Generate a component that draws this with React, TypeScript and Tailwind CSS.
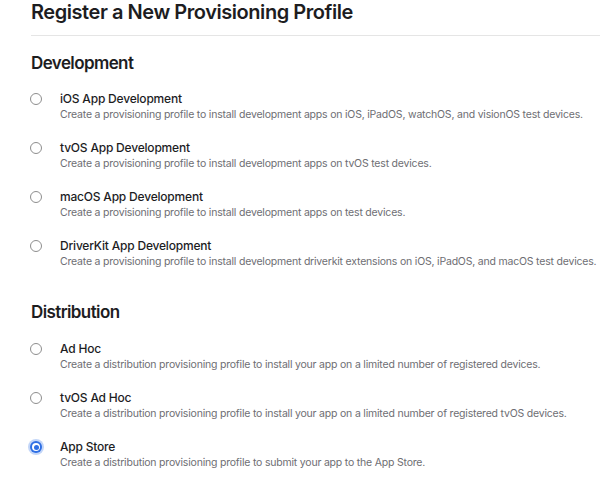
import React from "react";

type Item = { title: string; desc: string; checked?: boolean };

const dev: Item[] = [
  { title: "iOS App Development", desc: "Create a provisioning profile to install development apps on iOS, iPadOS, watchOS, and visionOS test devices." },
  { title: "tvOS App Development", desc: "Create a provisioning profile to install development apps on tvOS test devices." },
  { title: "macOS App Development", desc: "Create a provisioning profile to install development apps on test devices." },
  { title: "DriverKit App Development", desc: "Create a provisioning profile to install development driverkit extensions on iOS, iPadOS, and macOS test devices." },
];

const dist: Item[] = [
  { title: "Ad Hoc", desc: "Create a distribution provisioning profile to install your app on a limited number of registered devices." },
  { title: "tvOS Ad Hoc", desc: "Create a distribution provisioning profile to install your app on a limited number of registered tvOS devices." },
  { title: "App Store", desc: "Create a distribution provisioning profile to submit your app to the App Store.", checked: true },
];

function Radio({ checked }: { checked?: boolean }) {
  if (checked) {
    return (
      <span className="flex h-[12px] w-[12px] items-center justify-center rounded-full bg-[#2f6fe4] ring-2 ring-[#c3d6f8]">
        <span className="flex h-[8px] w-[8px] items-center justify-center rounded-full bg-white">
          <span className="h-[5px] w-[5px] rounded-full bg-[#2f6fe4]" />
        </span>
      </span>
    );
  }
  return <span className="block h-[12px] w-[12px] rounded-full border border-[#8e8e8e] bg-white" />;
}

function Row({ item }: { item: Item }) {
  return (
    <div className="flex items-start">
      <div className="flex w-[29px] shrink-0 justify-start pt-[3px]">
        <span className="-ml-px">
          <Radio checked={item.checked} />
        </span>
      </div>
      <div className="flex flex-col">
        <div className="text-[12px] leading-[17px] font-medium tracking-[-0.2px] text-[#1d1d1f]">{item.title}</div>
        <div className="whitespace-nowrap text-[10.5px] leading-[15px] tracking-[-0.2px] text-[#6e6e73]">{item.desc}</div>
      </div>
    </div>
  );
}

export default function App() {
  return (
    <div className="h-[480px] w-[600px] overflow-hidden bg-white" style={{ fontFamily: "Inter, 'Liberation Sans', sans-serif" }}>
      <div className="pl-[31px]">
        <h1 className="text-[20px] leading-[24px] font-semibold tracking-[-0.45px] text-[#1d1d1f]">Register a New Provisioning Profile</h1>
        <div className="mt-[11px] h-px bg-[#e5e5e5]" />
        <h2 className="mt-[16px] text-[17px] leading-[22px] font-semibold tracking-[-0.6px] text-[#1d1d1f]">Development</h2>
        <div className="mt-[16px] flex flex-col gap-[17px]">
          {dev.map((i) => (
            <Row key={i.title} item={i} />
          ))}
        </div>
        <h2 className="mt-[32px] text-[17px] leading-[22px] font-semibold tracking-[-0.6px] text-[#1d1d1f]">Distribution</h2>
        <div className="mt-[17px] flex flex-col gap-[17px]">
          {dist.map((i) => (
            <Row key={i.title} item={i} />
          ))}
        </div>
      </div>
    </div>
  );
}
